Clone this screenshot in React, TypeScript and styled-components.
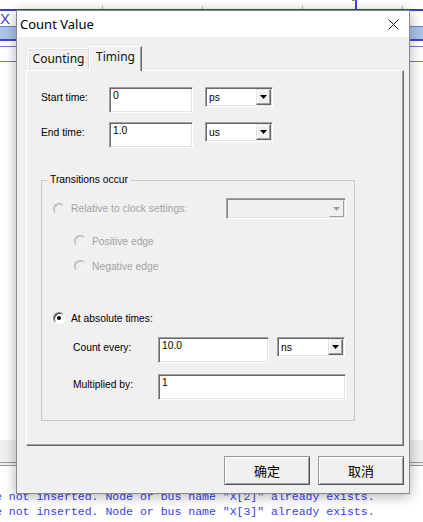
import React from "react";
import styled, { createGlobalStyle } from "styled-components";

const UI = `"Liberation Sans", Arial, sans-serif`;

const GlobalStyle = createGlobalStyle`
  html, body {
    margin: 0;
    padding: 0;
    background: #fff;
    overflow: hidden;
  }
`;

const Stage = styled.div`
  position: relative;
  width: 423px;
  height: 522px;
  overflow: hidden;
  background: #fff;
`;

/* waveform editor behind the dialog */
const Editor = styled.div`
  display: flex;
  flex-direction: column;
  height: 522px;
`;

const Ruler = styled.div`
  height: 9px;
  display: flex;
  align-items: flex-end;
  padding-left: 3px;
`;

const RulerCell = styled.div<{ $w: number }>`
  box-sizing: border-box;
  width: ${(p) => p.$w}px;
  height: 3px;
  border-right: 1px solid #b4b4b4;
`;

const Marker = styled.div`
  box-sizing: border-box;
  width: 5px;
  height: 9px;
  margin-left: 49px;
  border-top: 1px solid #9090a0;
  border-right: 2px solid #4040d0;
`;

const Lane = styled.div<{ $h: number; $bg?: string; $line?: string }>`
  height: ${(p) => p.$h}px;
  flex-shrink: 0;
  background: ${(p) => p.$bg ?? "#fff"};
  border-bottom: ${(p) => p.$line ?? "none"};
`;

const NodeName = styled(Lane)`
  font: 15px/15px ${UI};
  color: #4040d0;
  padding-left: 0;
`;

const Filler = styled.div`
  flex: 1;
  background: #fff;
`;

const LogArea = styled.div`
  flex-shrink: 0;
  height: 56px;
  box-sizing: border-box;
  padding-top: 23px;
  background: #fff;
  overflow: hidden;
`;

const LogLine = styled.div`
  font: 11.5px/15px "Liberation Mono", "Courier New", monospace;
  color: #3b3bf5;
  white-space: pre;
  margin-left: -5px;
`;

/* dialog */
const Dialog = styled.div`
  position: absolute;
  left: 16px;
  top: 10px;
  width: 394px;
  height: 484px;
  box-sizing: border-box;
  border: 1px solid #8a8a8a;
  background: #f0f0f0;
  box-shadow: 0 2px 12px rgba(0, 0, 0, 0.32);
  display: flex;
  flex-direction: column;
`;

const TitleBar = styled.div`
  height: 26px;
  flex-shrink: 0;
  background: #fff;
  display: flex;
  align-items: center;
  justify-content: space-between;
  padding: 0 10px 0 3px;
`;

const Title = styled.div`
  font: 13px "Noto Sans", "Open Sans", sans-serif;
  color: #000;
`;

const Body = styled.div`
  flex: 1;
  display: flex;
  flex-direction: column;
  padding: 9px 5px 0 9px;
`;

const TabRow = styled.div`
  display: flex;
  align-items: flex-end;
  height: 24px;
  padding-left: 2px;
  position: relative;
  z-index: 1;
`;

const Tab = styled.div<{ $active?: boolean; $w: number }>`
  box-sizing: border-box;
  width: ${(p) => p.$w}px;
  height: ${(p) => (p.$active ? 25 : 22)}px;
  margin-bottom: ${(p) => (p.$active ? -1 : 0)}px;
  background: #f0f0f0;
  border: 1px solid;
  border-bottom: none;
  border-color: #fff ${(p) => (p.$active ? "#696969" : "#d8d8d8")} transparent #fff;
  box-shadow: ${(p) => (p.$active ? "inset -1px 0 0 #a0a0a0" : "inset 1px 1px 0 #e0e0e0")};
  font: 12px "Noto Sans", "Open Sans", sans-serif;
  color: #111;
  text-align: center;
  line-height: ${(p) => (p.$active ? 19 : 19)}px;
`;

const Panel = styled.div`
  box-sizing: border-box;
  height: 376px;
  border: 1px solid;
  border-color: #fff #696969 #696969 #fff;
  box-shadow: inset -1px -1px 0 #a0a0a0;
  padding: 16px 0 0 14px;
  display: flex;
  flex-direction: column;
  font: 10.3px ${UI};
  color: #000;
`;

const FieldRow = styled.div<{ $mt?: number; $indent?: number }>`
  display: flex;
  align-items: flex-start;
  margin-top: ${(p) => p.$mt ?? 0}px;
  padding-left: ${(p) => p.$indent ?? 0}px;
`;

const FieldLabel = styled.label<{ $w: number }>`
  width: ${(p) => p.$w}px;
  flex-shrink: 0;
  padding-top: 4px;
  line-height: 13px;
  white-space: nowrap;
`;

const TextField = styled.input<{ $w: number }>`
  box-sizing: border-box;
  width: ${(p) => p.$w}px;
  height: 26px;
  margin: 0;
  padding: 0 3px 10px;
  border: 1px solid;
  border-color: #a0a0a0 #fff #fff #a0a0a0;
  box-shadow: inset 1px 1px 0 #696969, inset -1px -1px 0 #e3e3e3;
  background: #fff;
  font: 10.3px ${UI};
  color: #000;
  outline: none;
`;

const DropDown = styled.div<{ $w: number; $h?: number; $ml?: number; $disabled?: boolean }>`
  box-sizing: border-box;
  width: ${(p) => p.$w}px;
  height: ${(p) => p.$h ?? 20}px;
  margin-left: ${(p) => (p.$ml === undefined ? "auto" : `${p.$ml}px`)};
  display: flex;
  align-items: center;
  justify-content: space-between;
  padding: 1px 1px 1px 3px;
  border: 1px solid;
  border-color: ${(p) => (p.$disabled ? "#a0a0a0 #fff #fff #a0a0a0" : "#a0a0a0 #fff #fff #a0a0a0")};
  box-shadow: ${(p) =>
    p.$disabled
      ? "inset 1px 1px 0 #8a8a8a, inset -1px -1px 0 #e3e3e3"
      : "inset 1px 1px 0 #696969, inset -1px -1px 0 #e3e3e3"};
  background: ${(p) => (p.$disabled ? "#f0f0f0" : "#fff")};
  font: 10.3px ${UI};
`;

const ArrowButton = styled.div<{ $disabled?: boolean }>`
  box-sizing: border-box;
  width: 15px;
  height: 100%;
  display: grid;
  place-items: center;
  background: #f0f0f0;
  border: 1px solid;
  border-color: ${(p) => (p.$disabled ? "#f0f0f0 #a0a0a0 #a0a0a0 #f0f0f0" : "#e3e3e3 #696969 #696969 #e3e3e3")};
  box-shadow: ${(p) => (p.$disabled ? "none" : "inset -1px -1px 0 #a0a0a0, inset 1px 1px 0 #fff")};
`;

const Group = styled.fieldset`
  box-sizing: border-box;
  width: 314px;
  margin: 26px 0 0;
  padding: 12px 8px 20px 11px;
  border: 1px solid #c8c8c8;
  display: flex;
  flex-direction: column;
  min-width: 0;
`;

const GroupTitle = styled.legend`
  padding: 0 2px;
  margin-left: -5px;
  line-height: 12px;
  font: 10.3px/12px ${UI};
  color: #000;
`;

const RadioRow = styled.div<{ $mt?: number; $indent?: number; $h?: number; $disabled?: boolean }>`
  display: flex;
  align-items: center;
  gap: 6px;
  height: ${(p) => p.$h ?? 14}px;
  margin-top: ${(p) => p.$mt ?? 0}px;
  padding-left: ${(p) => p.$indent ?? 0}px;
  color: ${(p) => (p.$disabled ? "#a3a3a3" : "#000")};
  white-space: nowrap;
`;

const RadioMark = styled.span<{ $checked?: boolean; $disabled?: boolean }>`
  box-sizing: border-box;
  width: 12px;
  height: 12px;
  flex-shrink: 0;
  border-radius: 50%;
  border: 1px solid;
  border-color: ${(p) => (p.$disabled ? "#b4b4b4 #f4f4f4 #f4f4f4 #b4b4b4" : "#808080 #fff #fff #808080")};
  box-shadow: ${(p) => (p.$disabled ? "inset 1px 1px 0 #cfcfcf" : "inset 1px 1px 0 #404040")};
  background: ${(p) => (p.$disabled ? "#f0f0f0" : "#fff")};
  display: grid;
  place-items: center;

  &::after {
    content: "";
    display: ${(p) => (p.$checked ? "block" : "none")};
    width: 4px;
    height: 4px;
    border-radius: 50%;
    background: #000;
  }
`;

const Footer = styled.div`
  display: flex;
  justify-content: flex-end;
  gap: 8px;
  margin-top: 10px;
`;

const DlgButton = styled.button`
  box-sizing: border-box;
  width: 86px;
  height: 29px;
  margin: 0;
  padding: 0;
  background: #f0f0f0;
  border: 1px solid;
  border-color: #9a9a9a #555 #555 #9a9a9a;
  box-shadow: inset 1px 1px 0 #fff, inset -1px -1px 0 #a0a0a0;
  font: 13px "Noto Sans CJK SC", "Noto Sans", sans-serif;
  color: #000;
`;

function Arrow({ disabled }: { disabled?: boolean }) {
  return (
    <ArrowButton $disabled={disabled}>
      <svg width="7" height="4" viewBox="0 0 7 4">
        <path d="M0 0h7L3.5 4z" fill={disabled ? "#a0a0a0" : "#000"} />
      </svg>
    </ArrowButton>
  );
}

function Select({ value, w, h, ml, disabled }: { value: string; w: number; h?: number; ml?: number; disabled?: boolean }) {
  return (
    <DropDown $w={w} $h={h} $ml={ml} $disabled={disabled}>
      <span>{value}</span>
      <Arrow disabled={disabled} />
    </DropDown>
  );
}

export default function App() {
  return (
    <Stage>
      <GlobalStyle />
      <Editor>
        <Ruler>
          <RulerCell $w={100} />
          <RulerCell $w={100} />
          <RulerCell $w={100} />
          <Marker />
          <RulerCell $w={46} />
        </Ruler>
        <Lane $h={2} $bg="#3c3cc8" />
        <NodeName $h={15} $line="1px solid #7a7ad8">X</NodeName>
        <Lane $h={12} $bg="#a9c5ec" $line="2px solid #4848c0" />
        <Lane $h={5} $line="1px solid #7070d8" />
        <Lane $h={14} $line="1px solid #7070d8" />
        <Filler />
        <Lane $h={22} $bg="#f0f0f0" $line="4px double #9a9a9a" />
        <LogArea>
          <LogLine>e not inserted. Node or bus name "X[2]" already exists.</LogLine>
          <LogLine>e not inserted. Node or bus name "X[3]" already exists.</LogLine>
        </LogArea>
      </Editor>

      <Dialog>
        <TitleBar>
          <Title>Count Value</Title>
          <svg width="11" height="11" viewBox="0 0 11 11">
            <path d="M0.5 0.5l10 10M10.5 0.5l-10 10" stroke="#1a1a1a" strokeWidth="1" />
          </svg>
        </TitleBar>
        <Body>
          <TabRow>
            <Tab $w={61}>Counting</Tab>
            <Tab $w={53} $active>
              Timing
            </Tab>
          </TabRow>
          <Panel>
            <FieldRow>
              <FieldLabel $w={68}>Start time:</FieldLabel>
              <TextField $w={84} defaultValue="0" />
              <Select value="ps" w={68} ml={12} />
            </FieldRow>
            <FieldRow $mt={9}>
              <FieldLabel $w={68}>End time:</FieldLabel>
              <TextField $w={84} defaultValue="1.0" />
              <Select value="us" w={68} ml={12} />
            </FieldRow>

            <Group>
              <GroupTitle>Transitions occur</GroupTitle>
              <RadioRow $h={21} $disabled>
                <RadioMark $disabled />
                <span>Relative to clock settings:</span>
                <Select value="" w={120} h={21} disabled />
              </RadioRow>
              <RadioRow $mt={15} $indent={21} $disabled>
                <RadioMark $disabled />
                <span>Positive edge</span>
              </RadioRow>
              <RadioRow $mt={11} $indent={21} $disabled>
                <RadioMark $disabled />
                <span>Negative edge</span>
              </RadioRow>
              <RadioRow $mt={38}>
                <RadioMark $checked />
                <span>At absolute times:</span>
              </RadioRow>
              <FieldRow $mt={12} $indent={20}>
                <FieldLabel $w={85}>Count every:</FieldLabel>
                <TextField $w={111} defaultValue="10.0" />
                <Select value="ns" w={68} ml={8} />
              </FieldRow>
              <FieldRow $mt={11} $indent={20}>
                <FieldLabel $w={85}>Multiplied by:</FieldLabel>
                <TextField $w={188} defaultValue="1" />
              </FieldRow>
            </Group>
          </Panel>
          <Footer>
            <DlgButton>确定</DlgButton>
            <DlgButton>取消</DlgButton>
          </Footer>
        </Body>
      </Dialog>
    </Stage>
  );
}
